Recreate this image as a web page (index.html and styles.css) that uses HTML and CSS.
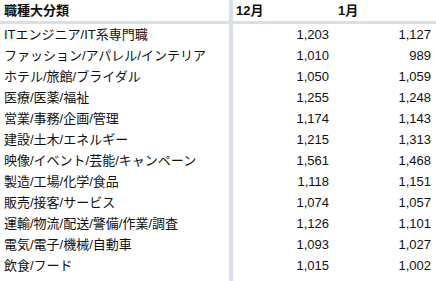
FILE: index.html
```html
<!DOCTYPE html>
<html lang="ja">
<head>
<meta charset="utf-8">
<link rel="stylesheet" href="styles.css">
</head>
<body>
<div class="sheet">
  <div class="cell head name">職種大分類</div>
  <div class="cell head m1">12月</div>
  <div class="cell head m2">1月</div>

  <div class="cell name">ITエンジニア/IT系専門職</div><div class="cell num m1">1,203</div><div class="cell num m2">1,127</div>
  <div class="cell name">ファッション/アパレル/インテリア</div><div class="cell num m1">1,010</div><div class="cell num m2">989</div>
  <div class="cell name">ホテル/旅館/ブライダル</div><div class="cell num m1">1,050</div><div class="cell num m2">1,059</div>
  <div class="cell name">医療/医薬/福祉</div><div class="cell num m1">1,255</div><div class="cell num m2">1,248</div>
  <div class="cell name">営業/事務/企画/管理</div><div class="cell num m1">1,174</div><div class="cell num m2">1,143</div>
  <div class="cell name">建設/土木/エネルギー</div><div class="cell num m1">1,215</div><div class="cell num m2">1,313</div>
  <div class="cell name">映像/イベント/芸能/キャンペーン</div><div class="cell num m1">1,561</div><div class="cell num m2">1,468</div>
  <div class="cell name">製造/工場/化学/食品</div><div class="cell num m1">1,118</div><div class="cell num m2">1,151</div>
  <div class="cell name">販売/接客/サービス</div><div class="cell num m1">1,074</div><div class="cell num m2">1,057</div>
  <div class="cell name">運輸/物流/配送/警備/作業/調査</div><div class="cell num m1">1,126</div><div class="cell num m2">1,101</div>
  <div class="cell name">電気/電子/機械/自動車</div><div class="cell num m1">1,093</div><div class="cell num m2">1,027</div>
  <div class="cell name">飲食/フード</div><div class="cell num m1">1,015</div><div class="cell num m2">1,002</div>
  <div class="name filler"></div><div class="m1"></div><div class="m2"></div>
</div>
</body>
</html>
```
FILE: styles.css
```css
html, body {
  margin: 0;
  padding: 0;
  background: #fff;
}
body {
  font-family: "Liberation Sans", "Noto Sans CJK JP", sans-serif;
  font-size: 13px;
  color: #111;
  width: 436px;
  height: 281px;
  overflow: hidden;
}
.sheet {
  display: grid;
  grid-template-columns: 233px 102px 101px;
  grid-template-rows: 24px repeat(12, 21px) 1fr;
  height: 281px;
}
.cell {
  line-height: 21px;
  white-space: nowrap;
  overflow: hidden;
}
.name {
  padding-left: 4px;
  border-right: 4px solid #dadee7;
}
.head {
  font-weight: bold;
  line-height: 21px;
  border-bottom: 3px solid #dadee7;
}
.head.m1 { padding-left: 3px; }
.head.m2 { padding-left: 3px; }
.num { text-align: right; }
.num.m1 { padding-right: 6px; }
.num.m2 { padding-right: 5px; }
.filler { min-height: 0; }
```
